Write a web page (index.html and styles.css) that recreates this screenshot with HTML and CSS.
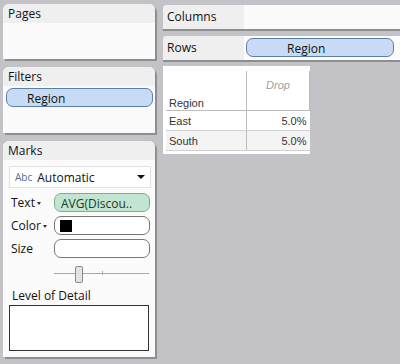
FILE: index.html
```html
<!DOCTYPE html>
<html lang="en">
<head>
    <meta charset="UTF-8">
    <title>Worksheet</title>
    <link rel="stylesheet" href="styles.css">
</head>
<body>
    <div class="workspace">
        <div class="side">
            <div class="card pages">
                <div class="card-head">Pages</div>
            </div>
            <div class="card filters">
                <div class="card-head">Filters</div>
                <div class="pill blue">Region</div>
            </div>
            <div class="card marks">
                <div class="card-head">Marks</div>
                <div class="mark-type">
                    <span class="abc">Abc</span>
                    <span class="mark-name">Automatic</span>
                    <span class="caret"></span>
                </div>
                <div class="shelf-row">
                    <span class="shelf-label">Text<i class="mini-caret"></i></span>
                    <div class="pill green">AVG(Discou..</div>
                </div>
                <div class="shelf-row">
                    <span class="shelf-label">Color<i class="mini-caret"></i></span>
                    <div class="field"><span class="swatch"></span></div>
                </div>
                <div class="shelf-row">
                    <span class="shelf-label">Size</span>
                    <div class="field"></div>
                </div>
                <div class="slider">
                    <span class="track"></span>
                    <span class="thumb"></span>
                    <span class="tick"></span>
                </div>
                <div class="lod-label">Level of Detail</div>
                <div class="lod-box"></div>
            </div>
        </div>

        <div class="main">
            <div class="shelf">
                <div class="shelf-name">Columns</div>
                <div class="shelf-drop"></div>
            </div>
            <div class="shelf">
                <div class="shelf-name">Rows</div>
                <div class="shelf-drop"><div class="pill blue">Region</div></div>
            </div>

            <div class="view">
                <table class="crosstab">
                    <tr class="head">
                        <td class="rh">Region</td>
                        <td class="mh">Drop</td>
                    </tr>
                    <tr>
                        <td>East</td>
                        <td class="num">5.0%</td>
                    </tr>
                    <tr class="alt">
                        <td>South</td>
                        <td class="num">5.0%</td>
                    </tr>
                </table>
            </div>
        </div>
    </div>
</body>
</html>
```

FILE: styles.css
```css
body {
    margin: 0;
    background: #c3c3c7;
    font-family: "Open Sans", "Noto Sans", sans-serif;
    font-size: 11px;
    color: #111;
    width: 400px;
    height: 364px;
    overflow: hidden;
}

.workspace {
    display: flex;
    padding: 4px 0 0 3px;
}

.side {
    width: 152px;
    display: flex;
    flex-direction: column;
    gap: 8px;
}

.card {
    background: #fbfbfb;
    border-radius: 6px 6px 0 0;
    box-shadow: 2px 2px 0 #8e8e92;
}

.card-head {
    background: #efefef;
    height: 19px;
    line-height: 19px;
    padding-left: 5px;
    font-size: 12px;
    border-radius: 6px 6px 0 0;
}

.pages {
    height: 55px;
}

.filters {
    height: 66px;
}

.filters .pill {
    margin: 2px 2px 0 3px;
    padding-left: 20px;
}

.pill {
    height: 19px;
    line-height: 19px;
    border-radius: 7px;
    font-size: 12px;
    box-sizing: border-box;
}

.pill.blue {
    background: #c7dbf4;
    border: 1px solid #5b7fa6;
}

.pill.green {
    background: #c1e5d1;
    border: 1px solid #74b290;
    color: #1b3a2a;
    padding-left: 6px;
    flex: 1;
}

.marks {
    height: 216px;
}

.mark-type {
    margin: 6px 4px 0 6px;
    height: 22px;
    background: #fff;
    border: 1px solid #e2e2e2;
    box-sizing: border-box;
    display: flex;
    align-items: center;
    padding-left: 5px;
    font-size: 12px;
}

.abc {
    color: #4f6f9a;
    font-size: 10px;
    margin-right: 5px;
}

.mark-name {
    flex: 1;
}

.caret {
    width: 0;
    height: 0;
    border-left: 4px solid transparent;
    border-right: 4px solid transparent;
    border-top: 4px solid #111;
    margin-right: 5px;
}

.shelf-row {
    display: flex;
    align-items: center;
    margin: 5px 5px 0 8px;
}

.shelf-row + .shelf-row {
    margin-top: 4px;
}

.shelf-label {
    width: 43px;
    font-size: 12px;
}

.mini-caret {
    display: inline-block;
    width: 0;
    height: 0;
    border-left: 2px solid transparent;
    border-right: 2px solid transparent;
    border-top: 3px solid #333;
    margin-left: 2px;
    vertical-align: middle;
}

.field {
    flex: 1;
    height: 19px;
    border: 1px solid #777;
    border-radius: 7px;
    background: #fff;
    box-sizing: border-box;
    display: flex;
    align-items: center;
    padding-left: 5px;
}

.swatch {
    width: 12px;
    height: 12px;
    background: #000;
}

.slider {
    position: relative;
    height: 20px;
    margin: 6px 6px 0 51px;
}

.track {
    position: absolute;
    left: 0;
    right: 0;
    top: 9px;
    height: 1px;
    background: #a8a8a8;
}

.thumb {
    position: absolute;
    left: 21px;
    top: 2px;
    width: 6px;
    height: 15px;
    background: #e3e3e3;
    border: 1px solid #8a8a8a;
    border-radius: 2px;
}

.tick {
    position: absolute;
    left: 48px;
    top: 7px;
    width: 1px;
    height: 4px;
    background: #a8a8a8;
}

.lod-label {
    margin: 3px 0 0 9px;
    font-size: 12px;
}

.lod-box {
    margin: 1px 6px 0 6px;
    height: 44px;
    border: 1px solid #333;
    background: #fff;
}

.main {
    margin-left: 8px;
    flex: 1;
    display: flex;
    flex-direction: column;
    gap: 7px;
    padding-top: 1px;
}

.shelf {
    display: flex;
    height: 24px;
    background: #fbfbfb;
    border-radius: 4px 0 0 0;
    box-shadow: 0 2px 0 #8e8e92;
}

.shelf-name {
    width: 77px;
    background: #efefef;
    padding-left: 4px;
    line-height: 24px;
    font-size: 12px;
    border-radius: 4px 0 0 0;
}

.shelf-drop {
    flex: 1;
    padding: 2px 6px 0 2px;
}

.shelf-drop .pill {
    padding-left: 40px;
}

.view {
    width: 147px;
    background: #fff;
    padding: 5px 0 3px 3px;
    margin-top: -1px;
    box-sizing: border-box;
}

.crosstab {
    border-collapse: collapse;
    font-family: "Liberation Sans", Arial, sans-serif;
    font-size: 11px;
    color: #333;
}

.crosstab td {
    height: 19px;
    padding: 0 3px;
    border-bottom: 1px solid #d0d0d0;
}

.crosstab td:first-child {
    width: 74px;
    border-right: 1px solid #bcbcbc;
}

.crosstab .head td {
    height: 31px;
    border-bottom: 1px solid #bcbcbc;
}

.crosstab .rh {
    vertical-align: bottom;
    padding-bottom: 1px;
}

.crosstab .mh {
    vertical-align: top;
    text-align: center;
    font-style: italic;
    color: #a0a0a0;
    padding-top: 8px;
    width: 56px;
    border-right: 1px solid #bcbcbc;
}

.crosstab .num {
    text-align: right;
}

.crosstab .alt td {
    background: #f4f4f4;
}
```
